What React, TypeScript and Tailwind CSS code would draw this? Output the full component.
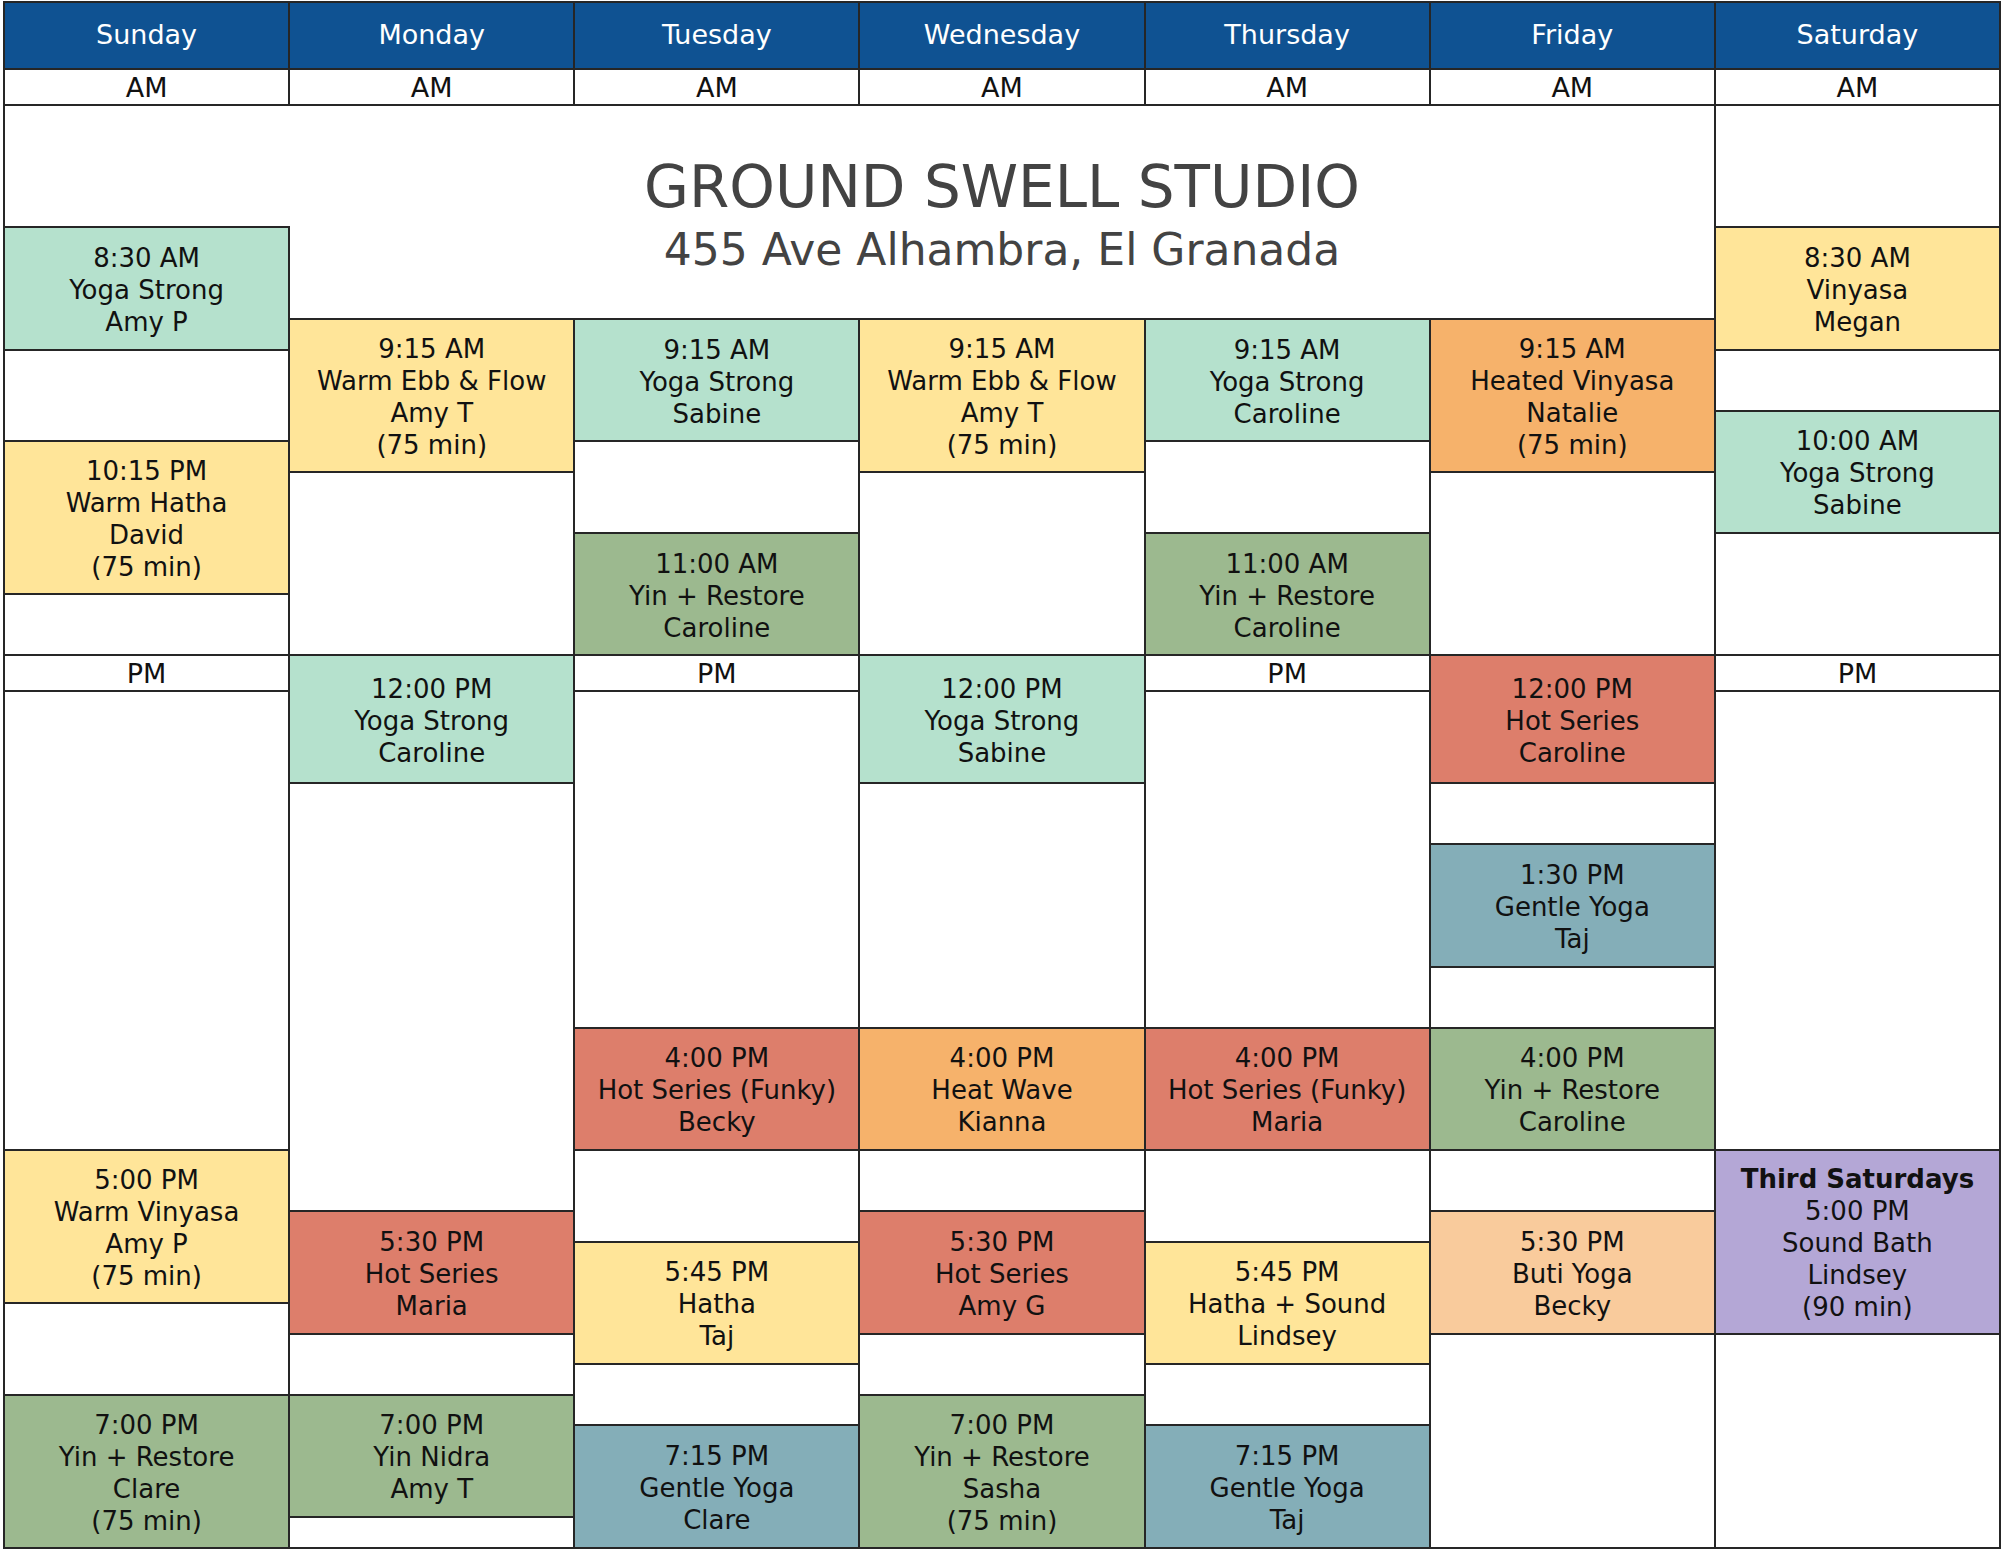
import type { ReactNode } from 'react';

type T = [number, number];

interface ClassBlock {
  start: T;
  end: T;
  lines: string[];
  bg: string;
  boldFirst?: boolean;
}

const C = {
  mint: 'bg-[#b5e1cd]',
  yellow: 'bg-[#ffe599]',
  sage: 'bg-[#9cb98f]',
  salmon: 'bg-[#dd7e6b]',
  orange: 'bg-[#f6b26b]',
  teal: 'bg-[#84aeb8]',
  peach: 'bg-[#f9cb9c]',
  lavender: 'bg-[#b4a7d6]',
};

const DAYS: { name: string; blocks: ClassBlock[] }[] = [
  {
    name: 'Sunday',
    blocks: [
      { start: [8, 30], end: [9, 30], bg: C.mint, lines: ['8:30 AM', 'Yoga Strong', 'Amy P'] },
      { start: [10, 15], end: [11, 30], bg: C.yellow, lines: ['10:15 PM', 'Warm Hatha', 'David', '(75 min)'] },
      { start: [17, 0], end: [18, 15], bg: C.yellow, lines: ['5:00 PM', 'Warm Vinyasa', 'Amy P', '(75 min)'] },
      { start: [19, 0], end: [20, 15], bg: C.sage, lines: ['7:00 PM', 'Yin + Restore', 'Clare', '(75 min)'] },
    ],
  },
  {
    name: 'Monday',
    blocks: [
      { start: [9, 15], end: [10, 30], bg: C.yellow, lines: ['9:15 AM', 'Warm Ebb & Flow', 'Amy T', '(75 min)'] },
      { start: [12, 0], end: [13, 0], bg: C.mint, lines: ['12:00 PM', 'Yoga Strong', 'Caroline'] },
      { start: [17, 30], end: [18, 30], bg: C.salmon, lines: ['5:30 PM', 'Hot Series', 'Maria'] },
      { start: [19, 0], end: [20, 0], bg: C.sage, lines: ['7:00 PM', 'Yin Nidra', 'Amy T'] },
    ],
  },
  {
    name: 'Tuesday',
    blocks: [
      { start: [9, 15], end: [10, 15], bg: C.mint, lines: ['9:15 AM', 'Yoga Strong', 'Sabine'] },
      { start: [11, 0], end: [12, 0], bg: C.sage, lines: ['11:00 AM', 'Yin + Restore', 'Caroline'] },
      { start: [16, 0], end: [17, 0], bg: C.salmon, lines: ['4:00 PM', 'Hot Series (Funky)', 'Becky'] },
      { start: [17, 45], end: [18, 45], bg: C.yellow, lines: ['5:45 PM', 'Hatha', 'Taj'] },
      { start: [19, 15], end: [20, 15], bg: C.teal, lines: ['7:15 PM', 'Gentle Yoga', 'Clare'] },
    ],
  },
  {
    name: 'Wednesday',
    blocks: [
      { start: [9, 15], end: [10, 30], bg: C.yellow, lines: ['9:15 AM', 'Warm Ebb & Flow', 'Amy T', '(75 min)'] },
      { start: [12, 0], end: [13, 0], bg: C.mint, lines: ['12:00 PM', 'Yoga Strong', 'Sabine'] },
      { start: [16, 0], end: [17, 0], bg: C.orange, lines: ['4:00 PM', 'Heat Wave', 'Kianna'] },
      { start: [17, 30], end: [18, 30], bg: C.salmon, lines: ['5:30 PM', 'Hot Series', 'Amy G'] },
      { start: [19, 0], end: [20, 15], bg: C.sage, lines: ['7:00 PM', 'Yin + Restore', 'Sasha', '(75 min)'] },
    ],
  },
  {
    name: 'Thursday',
    blocks: [
      { start: [9, 15], end: [10, 15], bg: C.mint, lines: ['9:15 AM', 'Yoga Strong', 'Caroline'] },
      { start: [11, 0], end: [12, 0], bg: C.sage, lines: ['11:00 AM', 'Yin + Restore', 'Caroline'] },
      { start: [16, 0], end: [17, 0], bg: C.salmon, lines: ['4:00 PM', 'Hot Series (Funky)', 'Maria'] },
      { start: [17, 45], end: [18, 45], bg: C.yellow, lines: ['5:45 PM', 'Hatha + Sound', 'Lindsey'] },
      { start: [19, 15], end: [20, 15], bg: C.teal, lines: ['7:15 PM', 'Gentle Yoga', 'Taj'] },
    ],
  },
  {
    name: 'Friday',
    blocks: [
      { start: [9, 15], end: [10, 30], bg: C.orange, lines: ['9:15 AM', 'Heated Vinyasa', 'Natalie', '(75 min)'] },
      { start: [12, 0], end: [13, 0], bg: C.salmon, lines: ['12:00 PM', 'Hot Series', 'Caroline'] },
      { start: [13, 30], end: [14, 30], bg: C.teal, lines: ['1:30 PM', 'Gentle Yoga', 'Taj'] },
      { start: [16, 0], end: [17, 0], bg: C.sage, lines: ['4:00 PM', 'Yin + Restore', 'Caroline'] },
      { start: [17, 30], end: [18, 30], bg: C.peach, lines: ['5:30 PM', 'Buti Yoga', 'Becky'] },
    ],
  },
  {
    name: 'Saturday',
    blocks: [
      { start: [8, 30], end: [9, 30], bg: C.yellow, lines: ['8:30 AM', 'Vinyasa', 'Megan'] },
      { start: [10, 0], end: [11, 0], bg: C.mint, lines: ['10:00 AM', 'Yoga Strong', 'Sabine'] },
      {
        start: [17, 0],
        end: [18, 30],
        bg: C.lavender,
        boldFirst: true,
        lines: ['Third Saturdays', '5:00 PM', 'Sound Bath', 'Lindsey', '(90 min)'],
      },
    ],
  },
];

// grid line for a time; 3:00-3:45 PM rows are not in the sheet
const line = ([h, m]: T) => {
  const t = h * 60 + m;
  if (t < 720) return 3 + (t - 450) / 15;
  if (t === 720) return 21;
  if (t <= 900) return 22 + (t - 735) / 15;
  return 33 + (t - 960) / 15;
};

const cell = 'border-r-2 border-b-2 border-[#262626]';
const TITLE_END = 10; // 9:15 AM

function Cell({ col, from, to, className, children }: {
  col: number;
  from: number;
  to: number;
  className?: string;
  children?: ReactNode;
}) {
  return (
    <div
      className={className}
      style={{ gridColumn: `${col} / ${col + 1}`, gridRow: `${from} / ${to}` }}
    >
      {children}
    </div>
  );
}

function DayColumn({ col, blocks }: { col: number; blocks: ClassBlock[] }) {
  const out: ReactNode[] = [];
  const middle = col >= 2 && col <= 6;
  let cursor = middle ? TITLE_END : 3;

  const fill = (from: number, to: number) => {
    if (from < 21 && to > 21) {
      out.push(<Cell key={`e${from}`} col={col} from={from} to={21} className={from === 3 && col === 1 ? 'border-b-2 border-[#262626]' : cell} />);
      from = 21;
    }
    if (from === 21 && to > 21) {
      out.push(
        <Cell key="pm" col={col} from={21} to={22} className={`${cell} flex items-center justify-center text-[27px] leading-none text-[#111]`}>
          PM
        </Cell>
      );
      from = 22;
    }
    if (from < to) {
      out.push(<Cell key={`e${from}`} col={col} from={from} to={to} className={from === 3 && col === 1 ? 'border-b-2 border-[#262626]' : cell} />);
    }
  };

  for (const b of blocks) {
    const s = line(b.start);
    const e = line(b.end);
    if (s > cursor) fill(cursor, s);
    out.push(
      <Cell key={`b${s}`} col={col} from={s} to={e} className={`${cell} ${b.bg} flex flex-col items-center justify-center pt-[3px] text-center text-[26px] leading-[32px] text-[#111]`}>
        {b.lines.map((l, i) => (
          <span key={i} className={i === 0 && b.boldFirst ? 'font-bold' : ''}>
            {l}
          </span>
        ))}
      </Cell>
    );
    cursor = e;
  }
  if (cursor < 50) fill(cursor, 50);
  return <>{out}</>;
}

export default function App() {
  return (
    <div className="w-[2008px] h-[1556px] bg-white pt-[1px] pl-[3px] [font-family:'DejaVu_Sans','Liberation_Sans',sans-serif]">
      <div className="grid w-[1998px] grid-cols-7 grid-rows-[67px_36px_repeat(18,30.58px)_36px_repeat(28,30.58px)] border-t-2 border-l-2 border-[#262626]">
        {DAYS.map((d, i) => (
          <Cell key={d.name} col={i + 1} from={1} to={2} className={`${cell} bg-[#0f5292] flex items-center justify-center text-[27px] text-white`}>
            {d.name}
          </Cell>
        ))}
        {DAYS.map((d, i) => (
          <Cell key={`am-${d.name}`} col={i + 1} from={2} to={3} className={`${cell} flex items-center justify-center text-[27px] leading-none text-[#111]`}>
            AM
          </Cell>
        ))}

        {/* merged title cell, Monday to Friday */}
        <div
          className="border-r-2 border-b-2 border-[#262626] flex flex-col items-center justify-center pt-[9px] text-[#434343]"
          style={{ gridColumn: '2 / 7', gridRow: `3 / ${TITLE_END}` }}
        >
          <div className="text-[58px] leading-[62px]">GROUND SWELL STUDIO</div>
          <div className="mt-[4px] text-[44px] leading-[56px]">455 Ave Alhambra, El Granada</div>
        </div>

        {DAYS.map((d, i) => (
          <DayColumn key={`col-${d.name}`} col={i + 1} blocks={d.blocks} />
        ))}
      </div>
    </div>
  );
}
